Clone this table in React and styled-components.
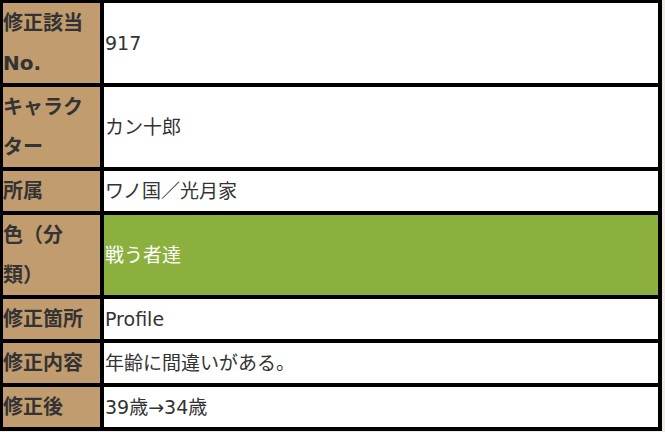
import React from 'react';
import styled, { createGlobalStyle } from 'styled-components';

const GlobalStyle = createGlobalStyle`
    body {
        margin: 0;
        background-color: #f1ede6;
        font-family: "DejaVu Sans", "Noto Sans CJK JP", sans-serif;
    }
`;

const Table = styled.div`
    width: 655px;
    display: grid;
    grid-template-columns: 97px 1fr;
    gap: 4px;
    padding: 3px 4px 4px 3px;
    background-color: #000;
`;

const Label = styled.div`
    background-color: #c19c6f;
    color: #333;
    font-weight: 700;
    font-size: 20px;
    line-height: 40px;
    display: flex;
    align-items: center;
    text-spacing-trim: space-all;
`;

const Value = styled.div`
    background-color: ${({ $highlight }) => ($highlight ? '#8cb03e' : '#fff')};
    color: ${({ $highlight }) => ($highlight ? '#fff' : '#333')};
    font-size: 19px;
    line-height: 40px;
    padding-left: 1px;
    display: flex;
    align-items: center;
    text-spacing-trim: space-all;
`;

const rows = [
    { label: '修正該当No.', value: '917' },
    { label: 'キャラクター', value: 'カン十郎' },
    { label: '所属', value: 'ワノ国／光月家' },
    { label: '色（分類）', value: '戦う者達', highlight: true },
    { label: '修正箇所', value: 'Profile' },
    { label: '修正内容', value: '年齢に間違いがある。' },
    { label: '修正後', value: '39歳→34歳' },
];

const App = () => (
    <>
        <GlobalStyle />
        <Table>
            {rows.map(row => (
                <React.Fragment key={row.label}>
                    <Label>{row.label}</Label>
                    <Value $highlight={row.highlight}>{row.value}</Value>
                </React.Fragment>
            ))}
        </Table>
    </>
);

export default App;
